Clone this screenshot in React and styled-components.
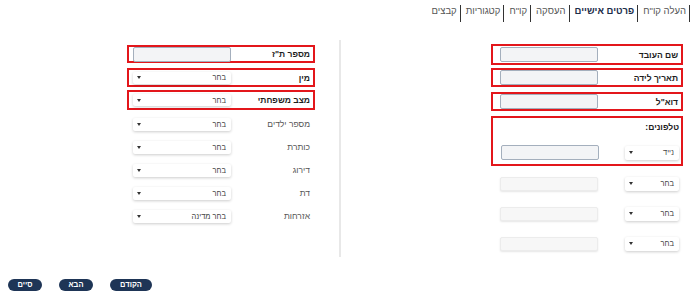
import React from "react";
import styled, { createGlobalStyle } from "styled-components";

const GlobalStyle = createGlobalStyle`
  html, body {
    margin: 0;
    padding: 0;
    background: #fff;
  }
  body {
    font-family: "Liberation Sans", "Open Sans", "DejaVu Sans", sans-serif;
  }
`;

const Page = styled.div`
  width: 692px;
  height: 294px;
  display: flex;
  flex-direction: column;
  overflow: hidden;
`;

const Tabs = styled.ul`
  direction: rtl;
  display: flex;
  list-style: none;
  margin: 0;
  padding: 5px 2px 0 0;
  height: 17px;
`;

const Tab = styled.li`
  font-size: 9.5px;
  line-height: 12px;
  color: ${(p) => (p.$active ? "#1c2d4a" : "#555")};
  font-weight: ${(p) => (p.$active ? 700 : 400)};
  border-right: 1.5px solid #333;
  padding-right: 3px;
  margin-left: 5px;
`;

const Main = styled.div`
  direction: rtl;
  display: flex;
  align-items: flex-start;
  padding: 18px 9px 0 0;
`;

const Column = styled.div`
  width: ${(p) => p.$width}px;
  display: flex;
  flex-direction: column;
`;

const Divider = styled.div`
  width: 2px;
  height: 217px;
  background: #e8e8e8;
  margin: 0 150px 0 24px;
`;

const Field = styled.div`
  display: flex;
  align-items: center;
  justify-content: space-between;
  box-sizing: border-box;
  height: ${(p) => p.$h}px;
  margin-top: ${(p) => p.$mt || 0}px;
  padding: ${(p) => p.$pad};
  border: 2px solid ${(p) => (p.$marked ? "#e3161b" : "transparent")};
`;

const PhoneBox = styled.div`
  box-sizing: border-box;
  height: 50px;
  margin-top: 5px;
  border: 2px solid #e3161b;
  padding: 3px 2px 0 8px;
  display: flex;
  flex-direction: column;
`;

const PhoneTitle = styled.div`
  font-size: 8.5px;
  font-weight: 700;
  color: #222;
  line-height: 12px;
  height: 24px;
`;

const PhoneRow = styled.div`
  display: flex;
  align-items: center;
  justify-content: space-between;
  height: 15px;
  margin-top: ${(p) => p.$mt || 0}px;
  padding: ${(p) => p.$pad || "0"};
`;

const Label = styled.span`
  font-size: 8.5px;
  line-height: 12px;
  color: ${(p) => (p.$strong ? "#1d1d1d" : "#555")};
  font-weight: ${(p) => (p.$strong ? 700 : 400)};
  white-space: nowrap;
`;

const TextInput = styled.div`
  box-sizing: border-box;
  width: 98px;
  height: ${(p) => p.$h || 15}px;
  border-radius: 2px;
  background: ${(p) => (p.$plain ? "#f7f7f7" : "#f3f4f6")};
  border: ${(p) => (p.$plain ? "1px solid #ececec" : "1px solid #a4afbd")};
  box-shadow: ${(p) => (p.$plain ? "0 1px 2px rgba(0,0,0,0.1)" : "none")};
`;

const Select = styled.div`
  box-sizing: border-box;
  width: ${(p) => p.$w}px;
  height: ${(p) => p.$h || 13}px;
  background: #fff;
  border-radius: 2px;
  box-shadow: 0 1px 3px rgba(0, 0, 0, 0.2);
  display: flex;
  align-items: center;
  justify-content: space-between;
  padding: 0 5px 0 4px;
  font-size: 7.5px;
  color: #444;
`;

const Caret = styled.span`
  width: 0;
  height: 0;
  border-left: 2.5px solid transparent;
  border-right: 2.5px solid transparent;
  border-top: 3px solid #333;
`;

const Footer = styled.div`
  margin-top: auto;
  margin-bottom: 3px;
  display: flex;
  gap: 17px;
  padding-left: 8px;
`;

const Button = styled.button`
  height: 12px;
  width: ${(p) => p.$w}px;
  padding: 0;
  border: none;
  border-radius: 6px;
  background: #1e3556;
  color: #fff;
  font-family: inherit;
  font-size: 7.5px;
  font-weight: 700;
  line-height: 12px;
`;

const Dropdown = ({ text = "בחר", w, h }) => (
  <Select $w={w} $h={h}>
    <span>{text}</span>
    <Caret />
  </Select>
);

const tabs = ["העלה קו\"ח", "פרטים אישיים", "העסקה", "קו\"ח", "קטגוריות", "קבצים"];

const plainRows = [
  { label: "מספר ילדים" },
  { label: "כותרת" },
  { label: "דירוג" },
  { label: "דת" },
  { label: "אזרחות", text: "בחר מדינה" },
];

export default function App() {
  return (
    <Page>
      <GlobalStyle />
      <Tabs>
        {tabs.map((t) => (
          <Tab key={t} $active={t === "פרטים אישיים"}>
            {t}
          </Tab>
        ))}
      </Tabs>
      <Main>
        <Column $width={192}>
          <Field $marked $h={21} $pad="0 3px 0 7px" $mt={4}>
            <Label $strong>שם העובד</Label>
            <TextInput />
          </Field>
          <Field $marked $h={19} $pad="0 3px 0 7px" $mt={3}>
            <Label $strong>תאריך לידה</Label>
            <TextInput />
          </Field>
          <Field $marked $h={19} $pad="0 3px 0 7px" $mt={5}>
            <Label $strong>דוא"ל</Label>
            <TextInput />
          </Field>
          <PhoneBox>
            <PhoneTitle>טלפונים:</PhoneTitle>
            <PhoneRow>
              <Dropdown text="נייד" w={54} h={14} />
              <TextInput />
            </PhoneRow>
          </PhoneBox>
          {[0, 1, 2].map((i) => (
            <PhoneRow key={i} $mt={i === 0 ? 10 : 15} $pad="0 4px 0 9px">
              <Dropdown w={54} h={14} />
              <TextInput $plain $h={14} />
            </PhoneRow>
          ))}
        </Column>
        <Divider />
        <Column $width={188}>
          <Field $marked $h={18} $pad="0 3px 0 4px" $mt={5}>
            <Label $strong>מספר ת"ז</Label>
            <TextInput />
          </Field>
          <Field $marked $h={19} $pad="0 3px 0 4px" $mt={5}>
            <Label $strong>מין</Label>
            <Dropdown w={98} h={12} />
          </Field>
          <Field $marked $h={20} $pad="0 3px 0 4px" $mt={3}>
            <Label $strong>מצב משפחתי</Label>
            <Dropdown w={98} h={12} />
          </Field>
          {plainRows.map((r, i) => (
            <Field key={r.label} $h={14} $pad="0 3px 0 4px" $mt={i === 0 ? 7 : 9}>
              <Label>{r.label}</Label>
              <Dropdown w={98} h={13} text={r.text} />
            </Field>
          ))}
        </Column>
      </Main>
      <Footer>
        <Button $w={34}>סיים</Button>
        <Button $w={34}>הבא</Button>
        <Button $w={42}>הקודם</Button>
      </Footer>
    </Page>
  );
}
